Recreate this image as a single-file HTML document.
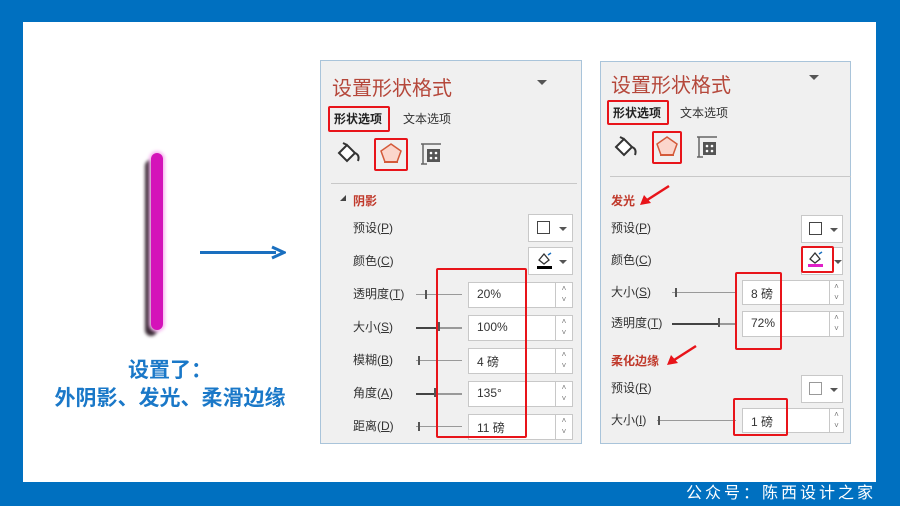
<!DOCTYPE html>
<html><head><meta charset="utf-8"><style>
*{margin:0;padding:0;box-sizing:border-box}
body{width:900px;height:506px;background:#0070c0;position:relative;overflow:hidden;font-family:"Liberation Sans","Noto Sans CJK SC",sans-serif}
.a{position:absolute}
#w{left:23px;top:22px;width:853px;height:460px;background:#fff}
.p{background:#f0f0f0;border:1px solid #a9c4da}
.t{font-size:20px;color:#b5473a;white-space:nowrap}
.l{font-size:12px;color:#333;white-space:nowrap;line-height:14px}
.h{font-size:12px;color:#c0392b;font-weight:bold;white-space:nowrap}
.rb{border:2px solid #e8141a;border-radius:2px}
.in{background:#fff;border:1px solid #c8c8c8;font-size:12px;color:#333;padding:4px 0 0 8px;height:26px}
.sp{background:#fff;border:1px solid #c8c8c8;border-left:none;font-size:8px;color:#777;text-align:center;line-height:11px;height:26px}
.sl{height:1px;background:#999}
.tk{width:2px;height:9px;background:#555}
.dd{background:#fff;border:1px solid #c8c8c8;height:28px}
.sq{border:1.5px solid #444;width:13px;height:13px}
.tri{width:0;height:0;border-left:4px solid transparent;border-right:4px solid transparent;border-top:4px solid #555}
</style></head><body>
<div id="w" class="a"></div>

<!-- bar -->
<div class="a" style="left:145px;top:160px;width:12px;height:176px;border-radius:6px;background:#3a2a35;filter:blur(1.5px)"></div>
<div class="a" style="left:149px;top:151px;width:16px;height:181px;border-radius:8px;background:#f6b8f0;filter:blur(1.5px)"></div>
<div class="a" style="left:151px;top:153px;width:12px;height:177px;border-radius:6px;background:#d413b9"></div>
<div class="a" style="left:30px;top:355px;width:280px;text-align:center;color:#1a78c8;font-weight:bold;font-size:21px;line-height:28px;font-family:'Noto Sans CJK SC',sans-serif">设置了：<br>外阴影、发光、柔滑边缘</div>
<!-- arrow -->
<div class="a" style="left:200px;top:251px;width:76px;height:3px;background:#1a6fbf"></div>
<svg class="a" style="left:270px;top:245px" width="16" height="15"><path d="M2 2 L14 7.5 L2 13" fill="none" stroke="#1a6fbf" stroke-width="3"/></svg>

<!-- panel 1 -->
<div class="a p" style="left:320px;top:60px;width:262px;height:384px"></div>
<div class="a t" style="left:332px;top:72px">设置形状格式</div>
<div class="a tri" style="left:537px;top:80px;border-top-width:5px;border-left-width:5px;border-right-width:5px"></div>
<div class="a rb" style="left:328px;top:106px;width:62px;height:26px"></div>
<div class="a l" style="left:334px;top:112px;font-weight:bold;color:#222">形状选项</div>
<div class="a l" style="left:403px;top:112px">文本选项</div>
<svg class="a" style="left:336px;top:141px" width="26" height="24"><path d="M3 12 L11 4 L19 12 L11 20 Z" fill="#fff" stroke="#333" stroke-width="2"/><path d="M7 2 L11 4" stroke="#333" stroke-width="2"/><path d="M19 12 Q24 14 22 20" fill="none" stroke="#333" stroke-width="2"/></svg>
<div class="a rb" style="left:374px;top:138px;width:34px;height:33px"></div>
<svg class="a" style="left:378px;top:141px" width="26" height="26"><path d="M13 3 L23 10 L19 21 L7 21 L3 10 Z" fill="#fbd6cc" stroke="#d45a3a" stroke-width="1.5"/><path d="M6 21 L20 21" stroke="#d45a3a" stroke-width="2"/></svg>
<svg class="a" style="left:419px;top:142px" width="24" height="24"><path d="M2 2h20M2 22h6M4 2v20" stroke="#666" stroke-width="1.5"/><rect x="8" y="7" width="13" height="13" fill="#555"/><circle cx="12" cy="11" r="1.3" fill="#fff"/><circle cx="17" cy="11" r="1.3" fill="#fff"/><circle cx="12" cy="16" r="1.3" fill="#fff"/><circle cx="17" cy="16" r="1.3" fill="#fff"/></svg>
<div class="a" style="left:331px;top:183px;width:246px;height:1px;background:#c8c8c8"></div>
<div class="a" style="left:340px;top:195px;width:0;height:0;border-left:6px solid transparent;border-bottom:6px solid #444"></div>
<div class="a h" style="left:353px;top:192px">阴影</div>
<div class="a l" style="left:353px;top:221px">预设(<u>P</u>)</div>
<div class="a dd" style="left:528px;top:214px;width:45px"></div><div class="a sq" style="left:537px;top:221px"></div><div class="a tri" style="left:559px;top:227px"></div>
<div class="a l" style="left:353px;top:254px">颜色(<u>C</u>)</div>
<div class="a dd" style="left:528px;top:247px;width:45px"></div>
<svg class="a" style="left:535px;top:250px" width="20" height="20"><path d="M4 10 L9 4 L14 10 L9 14 Z" fill="#fff" stroke="#333" stroke-width="1.3"/><path d="M13 5 l3 -2" stroke="#1a6fbf" stroke-width="1.5"/><rect x="2" y="16" width="15" height="3" fill="#000"/></svg>
<div class="a tri" style="left:559px;top:260px"></div>

<div class="a l" style="left:353px;top:287px">透明度(<u>T</u>)</div>
<div class="a l" style="left:353px;top:320px">大小(<u>S</u>)</div>
<div class="a l" style="left:353px;top:353px">模糊(<u>B</u>)</div>
<div class="a l" style="left:353px;top:386px">角度(<u>A</u>)</div>
<div class="a l" style="left:353px;top:419px">距离(<u>D</u>)</div>
<div class="a sl" style="left:416px;top:294px;width:46px"></div><div class="a tk" style="left:425px;top:290px"></div>
<div class="a sl" style="left:416px;top:327px;width:46px;background:linear-gradient(90deg,#444 50%,#999 50%);height:2px"></div><div class="a tk" style="left:438px;top:322px"></div>
<div class="a sl" style="left:416px;top:360px;width:46px"></div><div class="a tk" style="left:418px;top:356px"></div>
<div class="a sl" style="left:416px;top:393px;width:46px;background:linear-gradient(90deg,#444 45%,#999 45%);height:2px"></div><div class="a tk" style="left:434px;top:388px"></div>
<div class="a sl" style="left:416px;top:426px;width:46px"></div><div class="a tk" style="left:418px;top:422px"></div>
<div class="a in" style="left:468px;top:282px;width:88px">20%</div><div class="a sp" style="left:556px;top:282px;width:17px">˄<br>˅</div>
<div class="a in" style="left:468px;top:315px;width:88px">100%</div><div class="a sp" style="left:556px;top:315px;width:17px">˄<br>˅</div>
<div class="a in" style="left:468px;top:348px;width:88px">4 磅</div><div class="a sp" style="left:556px;top:348px;width:17px">˄<br>˅</div>
<div class="a in" style="left:468px;top:381px;width:88px">135°</div><div class="a sp" style="left:556px;top:381px;width:17px">˄<br>˅</div>
<div class="a in" style="left:468px;top:414px;width:88px">11 磅</div><div class="a sp" style="left:556px;top:414px;width:17px">˄<br>˅</div>
<div class="a rb" style="left:436px;top:268px;width:91px;height:170px"></div>

<!-- panel 2 -->
<div class="a p" style="left:600px;top:61px;width:251px;height:383px"></div>
<div class="a t" style="left:611px;top:69px">设置形状格式</div>
<div class="a tri" style="left:809px;top:75px;border-top-width:5px;border-left-width:5px;border-right-width:5px"></div>
<div class="a rb" style="left:607px;top:100px;width:62px;height:25px"></div>
<div class="a l" style="left:613px;top:106px;font-weight:bold;color:#222">形状选项</div>
<div class="a l" style="left:680px;top:106px">文本选项</div>
<svg class="a" style="left:613px;top:135px" width="26" height="24"><path d="M3 12 L11 4 L19 12 L11 20 Z" fill="#fff" stroke="#333" stroke-width="2"/><path d="M7 2 L11 4" stroke="#333" stroke-width="2"/><path d="M19 12 Q24 14 22 20" fill="none" stroke="#333" stroke-width="2"/></svg>
<div class="a rb" style="left:652px;top:131px;width:30px;height:33px"></div>
<svg class="a" style="left:654px;top:134px" width="26" height="26"><path d="M13 3 L23 10 L19 21 L7 21 L3 10 Z" fill="#fbd6cc" stroke="#d45a3a" stroke-width="1.5"/><path d="M6 21 L20 21" stroke="#d45a3a" stroke-width="2"/></svg>
<svg class="a" style="left:695px;top:135px" width="24" height="24"><path d="M2 2h20M2 22h6M4 2v20" stroke="#666" stroke-width="1.5"/><rect x="8" y="7" width="13" height="13" fill="#555"/><circle cx="12" cy="11" r="1.3" fill="#fff"/><circle cx="17" cy="11" r="1.3" fill="#fff"/><circle cx="12" cy="16" r="1.3" fill="#fff"/><circle cx="17" cy="16" r="1.3" fill="#fff"/></svg>
<div class="a" style="left:610px;top:176px;width:241px;height:1px;background:#c8c8c8"></div>
<div class="a h" style="left:611px;top:192px">发光</div>
<svg class="a" style="left:636px;top:184px" width="36" height="24"><path d="M33 2 L8 18" stroke="#e8141a" stroke-width="2.5"/><path d="M4 21 L8 11 L15 19 Z" fill="#e8141a"/></svg>
<div class="a l" style="left:611px;top:221px">预设(<u>P</u>)</div>
<div class="a dd" style="left:801px;top:215px;width:42px"></div><div class="a sq" style="left:809px;top:222px"></div><div class="a tri" style="left:830px;top:228px"></div>
<div class="a l" style="left:611px;top:253px">颜色(<u>C</u>)</div>
<div class="a dd" style="left:801px;top:247px;width:42px"></div><div class="a tri" style="left:834px;top:260px"></div>
<svg class="a" style="left:806px;top:249px" width="20" height="20"><path d="M4 10 L9 4 L14 10 L9 14 Z" fill="#fff" stroke="#333" stroke-width="1.3"/><path d="M13 5 l3 -2" stroke="#1a6fbf" stroke-width="1.5"/><rect x="2" y="15" width="15" height="3" fill="#e020c8"/></svg>
<div class="a rb" style="left:801px;top:246px;width:33px;height:27px"></div>
<div class="a l" style="left:611px;top:285px">大小(<u>S</u>)</div>
<div class="a l" style="left:611px;top:316px">透明度(<u>T</u>)</div>
<div class="a sl" style="left:672px;top:292px;width:64px"></div><div class="a tk" style="left:675px;top:288px"></div>
<div class="a sl" style="left:672px;top:323px;width:64px;background:linear-gradient(90deg,#444 75%,#999 75%);height:2px"></div><div class="a tk" style="left:718px;top:318px"></div>
<div class="a in" style="left:742px;top:280px;width:88px;height:25px">8 磅</div><div class="a sp" style="left:830px;top:280px;width:14px;height:25px">˄<br>˅</div>
<div class="a in" style="left:742px;top:311px;width:88px;height:26px">72%</div><div class="a sp" style="left:830px;top:311px;width:14px">˄<br>˅</div>
<div class="a rb" style="left:735px;top:272px;width:47px;height:78px"></div>
<div class="a h" style="left:611px;top:352px">柔化边缘</div>
<svg class="a" style="left:663px;top:344px" width="36" height="24"><path d="M33 2 L8 18" stroke="#e8141a" stroke-width="2.5"/><path d="M4 21 L8 11 L15 19 Z" fill="#e8141a"/></svg>
<div class="a l" style="left:611px;top:381px">预设(<u>R</u>)</div>
<div class="a dd" style="left:801px;top:375px;width:42px"></div><div class="a sq" style="left:809px;top:382px;border-color:#999"></div><div class="a tri" style="left:830px;top:388px"></div>
<div class="a l" style="left:611px;top:413px">大小(<u>I</u>)</div>
<div class="a sl" style="left:657px;top:420px;width:79px"></div><div class="a tk" style="left:658px;top:416px"></div>
<div class="a in" style="left:742px;top:408px;width:88px;height:25px">1 磅</div><div class="a sp" style="left:830px;top:408px;width:14px;height:25px">˄<br>˅</div>
<div class="a rb" style="left:733px;top:398px;width:55px;height:38px"></div>

<div class="a" style="left:686px;top:484px;color:#fff;font-size:16px;letter-spacing:3px;white-space:nowrap;line-height:20px">公众号：陈西设计之家</div>
</body></html>
